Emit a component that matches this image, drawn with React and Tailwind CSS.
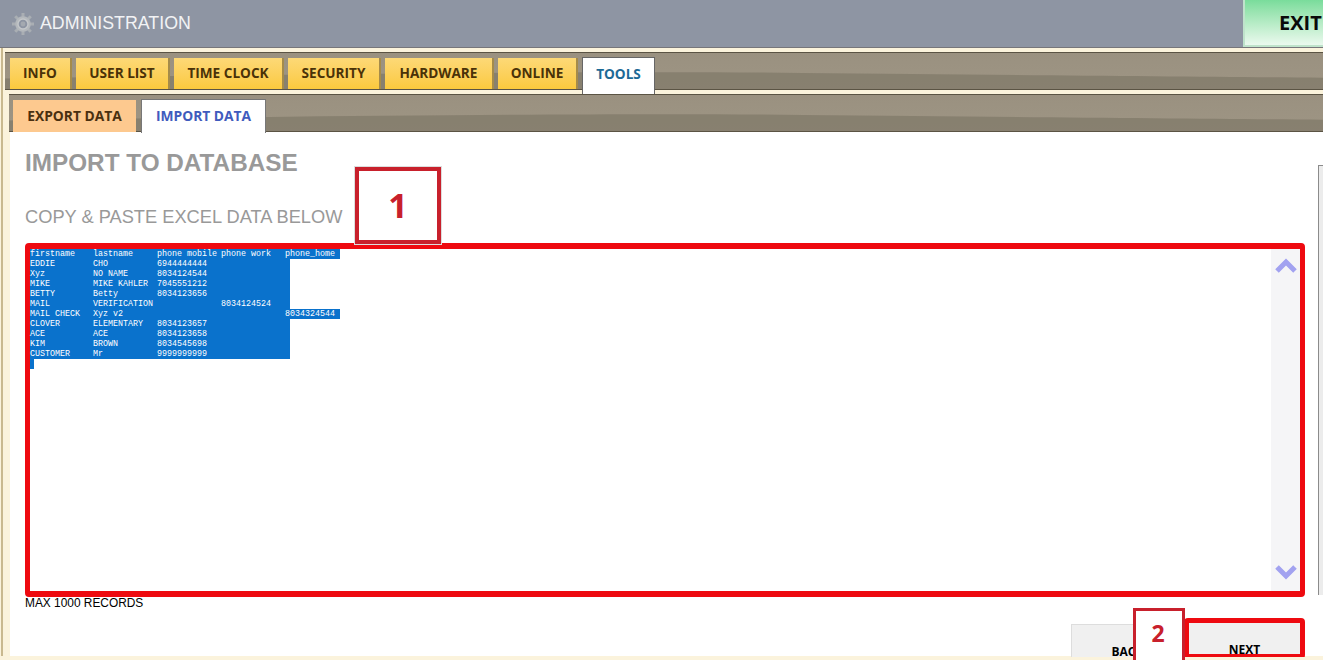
import React from "react";

const tabs = [
  { label: "INFO", w: "w-[62px]" },
  { label: "USER LIST", w: "w-[94px]" },
  { label: "TIME CLOCK", w: "w-[110px]" },
  { label: "SECURITY", w: "w-[93px]" },
  { label: "HARDWARE", w: "w-[109px]" },
  { label: "ONLINE", w: "w-[80px]" },
];

const rows = [
  ["firstname", "lastname", "phone mobile", "phone work", "phone_home"],
  ["EDDIE", "CHO", "6944444444"],
  ["Xyz", "NO NAME", "8034124544"],
  ["MIKE", "MIKE KAHLER", "7045551212"],
  ["BETTY", "Betty", "8034123656"],
  ["MAIL", "VERIFICATION", "", "8034124524"],
  ["MAIL CHECK", "Xyz v2", "", "", "8034324544"],
  ["CLOVER", "ELEMENTARY", "8034123657"],
  ["ACE", "ACE", "8034123658"],
  ["KIM", "BROWN", "8034545698"],
  ["CUSTOMER", "Mr", "9999999999"],
];

function Wave() {
  return (
    <svg className="absolute inset-0 w-full h-full" viewBox="0 0 1323 38" preserveAspectRatio="none">
      <path d="M0 27 C300 22 600 19 800 21 C1000 23 1200 25 1323 26 L1323 38 L0 38 Z" fill="#847c6c" fillOpacity="0.85" />
    </svg>
  );
}

function Gear() {
  return (
    <svg width="24" height="24" viewBox="0 0 24 24" fill="none">
      <g stroke="#a9aeb3" strokeWidth="3">
        <path d="M12 1v22M1 12h22M4.2 4.2l15.6 15.6M19.8 4.2L4.2 19.8" />
      </g>
      <circle cx="12" cy="12" r="7.8" fill="#b4b8bc" />
      <circle cx="12" cy="12" r="5" fill="#8e95a3" stroke="#c4c7ca" strokeWidth="1.4" />
      <circle cx="12" cy="12" r="2.4" fill="#a4a9b0" />
    </svg>
  );
}

function Chevron({ down }) {
  return (
    <svg width="22" height="16" viewBox="0 0 22 16" fill="none">
      <path d={down ? "M2 3l9 9 9-9" : "M2 13l9-9 9 9"} stroke="#a2a2f0" strokeWidth="5" />
    </svg>
  );
}

export default function App() {
  return (
    <div className="relative w-[1323px] h-[660px] overflow-hidden bg-[#fbf3dc] font-['Open_Sans',sans-serif]">
      <div className="flex justify-between h-[48px] bg-[#8e95a3] border-b border-[#77767a]">
        <div className="flex items-center gap-[5px] pl-[11px]">
          <Gear />
          <span className="font-['Liberation_Sans',sans-serif] text-[17.8px] text-[#f2f3f5]">ADMINISTRATION</span>
        </div>
        <div className="w-[80px] h-[47px] pl-[34px] flex items-center border-l-2 border-b-2 border-[#bfe3cb] bg-gradient-to-b from-[#79dc9b] to-[#eaf9ee] font-bold text-[20px] text-[#0a0a0a] whitespace-nowrap overflow-hidden">
          EXIT
        </div>
      </div>

      <div className="ml-[1px] pl-[1px] pt-[4px] border-l-2 border-[#c9b98f] bg-[#fbf3dc]">
        <div className="relative ml-[1px] h-[38px] border-y border-[#5b5444] bg-gradient-to-b from-[#9a9180] to-[#9e9584] flex items-start gap-[4px] pl-[5px] pt-[5px]">
          <Wave />
          {tabs.map((t) => (
            <div
              key={t.label}
              className={`relative ${t.w} h-[31px] flex items-center justify-center bg-gradient-to-b from-[#fdd976] to-[#fbc93c] border-r-2 border-[#a58b4a] text-[13.6px] font-bold text-[#4a3208]`}
            >
              {t.label}
            </div>
          ))}
          <div className="relative z-10 w-[73px] h-[37px] -mt-px flex items-center justify-center pb-[4px] bg-white border border-b-0 border-[#666] text-[13.6px] font-bold text-[#1d6a96]">
            TOOLS
          </div>
        </div>

        <div className="relative mt-[4px] ml-[5px] h-[38px] border-y border-[#5b5444] bg-gradient-to-b from-[#9a9180] to-[#9e9584] flex items-start gap-[5px] pl-[4px] pt-[5px]">
          <Wave />
          <div className="relative w-[123px] h-[32px] flex items-center justify-center bg-[#fdc98f] text-[13.8px] font-bold text-[#4a3010]">
            EXPORT DATA
          </div>
          <div className="relative w-[125px] h-[34px] -mt-px flex items-center justify-center bg-white border border-b-0 border-[#777] text-[13.8px] font-bold text-[#3f5bbd]">
            IMPORT DATA
          </div>
        </div>

        <div className="ml-[6px] h-[524px] bg-white flex">
          <div className="flex-1 pl-[15px] font-['Liberation_Sans',sans-serif]">
            <h1 className="mt-[15px] text-[24.3px] leading-[32px] font-bold text-[#999]">IMPORT TO DATABASE</h1>
            <p className="mt-[26px] text-[18.25px] leading-[24px] text-[#999]">COPY &amp; PASTE EXCEL DATA BELOW</p>

            <div className="mt-[14px] w-[1280px] h-[354px] flex justify-between border-x-[5px] border-y-[6px] border-[#ee0a10] rounded-[4px]">
              <div className="font-['Liberation_Mono',monospace] text-[8.33px] leading-[10px] text-white">
                {rows.map((r, i) => (
                  <div key={i} className={`flex h-[10px] bg-[#0a72cc] whitespace-pre ${r.length === 5 ? "w-[310px]" : "w-[260px]"}`}>
                    {r.map((c, j) => (
                      <span key={j} className={`shrink-0 ${j === 0 ? "w-[63px]" : "w-[64px]"}`}>{c}</span>
                    ))}
                  </div>
                ))}
                <div className="w-[4px] h-[10px] bg-[#0a72cc]" />
              </div>
              <div className="w-[29px] bg-[#f5f5f7] flex flex-col items-center justify-between pt-[9px] pb-[11px]">
                <Chevron />
                <Chevron down />
              </div>
            </div>

            <p className="mt-[-1px] text-[11.9px] leading-[14px] text-black">MAX 1000 RECORDS</p>

            <div className="mt-[14px] flex justify-end w-[1280px]">
              <div className="w-[113px] h-[40px] pt-[18px] text-center bg-[#f0f0f0] border border-[#ddd] font-['Open_Sans',sans-serif] text-[12px] font-bold text-black">
                BACK
              </div>
              <div className="w-[121px] h-[41px] -mt-[6px] pt-[19px] text-center bg-[#f0f0f0] border-[5px] border-[#ee0a10] rounded-[4px] font-['Open_Sans',sans-serif] text-[12px] font-bold leading-[16px] text-black">
                NEXT
              </div>
            </div>
          </div>
          <div className="w-[5px] mt-[33px] h-[430px] border-l border-t border-[#8b8b8b] bg-[#ececec]" />
        </div>
      </div>

      <div className="absolute left-0 right-0 top-[657px] h-[3px] bg-[#fbf3dc]" />
      <div className="absolute left-[355px] top-[167px] w-[86px] h-[77px] flex items-center justify-center border-[4px] border-[#c8202c] bg-white text-[34px] font-bold text-[#c8202c] outline outline-1 outline-[#ddd]">
        1
      </div>
      <div className="absolute left-[1133px] top-[608px] w-[52px] h-[60px] pb-[9px] pr-[2px] flex items-center justify-center border-[3px] border-[#c8202c] bg-white text-[23px] font-bold text-[#c8202c]">
        2
      </div>
    </div>
  );
}
